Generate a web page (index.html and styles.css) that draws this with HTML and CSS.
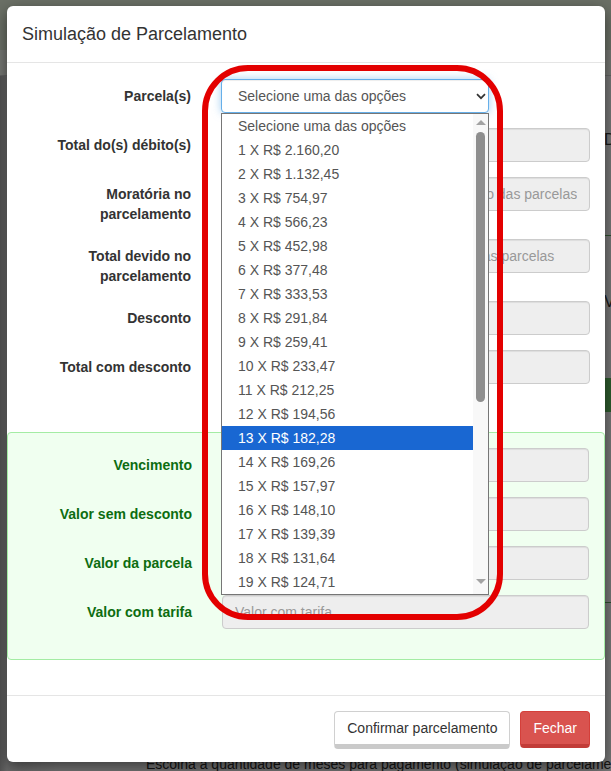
FILE: index.html
```html
<!DOCTYPE html>
<html lang="pt-BR">
<head>
<meta charset="utf-8">
<title>Simulação de Parcelamento</title>
<link rel="stylesheet" href="styles.css">
</head>
<body>
  <div class="page">
    <header class="page-nav"></header>
    <div class="page-sub"></div>
    <main class="page-main">
      <div class="page-left"></div>
      <aside class="page-right">
        <p class="side-title">Dados do débito</p>
        <div class="side-box">
          <p class="side-text">Valores</p>
          <div class="side-btn"></div>
        </div>
      </aside>
    </main>
    <p class="page-hint">Escolha a quantidade de meses para pagamento (simulação de parcelamento)</p>
  </div>

  <div class="backdrop"></div>

  <div class="modal" role="dialog" aria-labelledby="modal-title">
    <div class="modal-header">
      <h4 class="modal-title" id="modal-title">Simulação de Parcelamento</h4>
    </div>

    <div class="modal-body">
      <div class="form-row">
        <label class="form-label">Parcela(s)</label>
        <div class="field">
          <div class="select-box">
            <span>Selecione uma das opções</span>
            <svg class="chevron" width="10" height="7" viewBox="0 0 10 7"><path d="M1 1.2 L5 5.2 L9 1.2" fill="none" stroke="#333" stroke-width="1.7"/></svg>
          </div>
        </div>
      </div>
      <div class="form-row">
        <label class="form-label">Total do(s) débito(s)</label>
        <div class="field"><input class="form-control" readonly placeholder="Total do(s) débito(s)"></div>
      </div>
      <div class="form-row">
        <label class="form-label">Moratória no parcelamento</label>
        <div class="field"><input class="form-control" readonly placeholder="Moratória aplicada segundo o vencimento das parcelas"></div>
      </div>
      <div class="form-row">
        <label class="form-label">Total devido no parcelamento</label>
        <div class="field"><input class="form-control" readonly placeholder="Valor total devido com a soma de todas as parcelas"></div>
      </div>
      <div class="form-row">
        <label class="form-label">Desconto</label>
        <div class="field"><input class="form-control" readonly placeholder="Desconto"></div>
      </div>
      <div class="form-row">
        <label class="form-label">Total com desconto</label>
        <div class="field"><input class="form-control" readonly placeholder="Total com desconto"></div>
      </div>

      <div class="panel-success">
        <div class="form-row">
          <label class="form-label">Vencimento</label>
          <div class="field"><input class="form-control" readonly placeholder="Vencimento"></div>
        </div>
        <div class="form-row">
          <label class="form-label">Valor sem desconto</label>
          <div class="field"><input class="form-control" readonly placeholder="Valor sem desconto"></div>
        </div>
        <div class="form-row">
          <label class="form-label">Valor da parcela</label>
          <div class="field"><input class="form-control" readonly placeholder="Valor da parcela"></div>
        </div>
        <div class="form-row">
          <label class="form-label">Valor com tarifa</label>
          <div class="field"><input class="form-control" readonly placeholder="Valor com tarifa"></div>
        </div>
      </div>
    </div>

    <div class="modal-footer">
      <button class="btn btn-default" type="button">Confirmar parcelamento</button>
      <button class="btn btn-danger" type="button">Fechar</button>
    </div>

    <!-- open option list of the "Parcela(s)" select -->
    <div class="listbox" role="listbox">
      <ul class="options">
        <li>Selecione uma das opções</li>
        <li>1 X R$ 2.160,20</li>
        <li>2 X R$ 1.132,45</li>
        <li>3 X R$ 754,97</li>
        <li>4 X R$ 566,23</li>
        <li>5 X R$ 452,98</li>
        <li>6 X R$ 377,48</li>
        <li>7 X R$ 333,53</li>
        <li>8 X R$ 291,84</li>
        <li>9 X R$ 259,41</li>
        <li>10 X R$ 233,47</li>
        <li>11 X R$ 212,25</li>
        <li>12 X R$ 194,56</li>
        <li class="selected">13 X R$ 182,28</li>
        <li>14 X R$ 169,26</li>
        <li>15 X R$ 157,97</li>
        <li>16 X R$ 148,10</li>
        <li>17 X R$ 139,39</li>
        <li>18 X R$ 131,64</li>
        <li>19 X R$ 124,71</li>
      </ul>
      <div class="scrollbar">
        <div class="scroll-btn"><span class="arrow-up"></span></div>
        <div class="scroll-thumb"></div>
        <div class="scroll-space"></div>
        <div class="scroll-btn scroll-btn-down"><span class="arrow-down"></span></div>
      </div>
    </div>

    <!-- red marker drawn around the select -->
    <div class="marker"></div>
  </div>
</body>
</html>
```

FILE: styles.css
```css
* {
  box-sizing: border-box;
}

html,
body {
  margin: 0;
  padding: 0;
}

body {
  position: relative;
  width: 611px;
  height: 771px;
  overflow: hidden;
  font-family: "Liberation Sans", Arial, Helvetica, sans-serif;
  font-size: 14px;
  line-height: 20px;
  color: #333;
}

/* ---------- page underneath the dialog ---------- */
.page {
  height: 771px;
  background: linear-gradient(to right, #a6a6a6 0, #d4d4d4 7px, #ececec 60px, #eeeeee 100%);
}

.page-nav {
  height: 50px;
  background: #d6e0cd;
}

.page-sub {
  height: 26px;
  background: #eaeee6;
  border-bottom: 1px solid #c6c6c6;
}

.page-main {
  display: flex;
  height: 678px;
}

.page-left {
  width: 604px;
  flex: none;
}

.page-right {
  flex: 1;
  overflow: hidden;
}

.side-title {
  margin: 53px 0 0;
  font-size: 16px;
  line-height: 22px;
  white-space: nowrap;
  color: #333;
}

.side-box {
  margin-top: 84px;
  height: 368px;
  border-top: 1px solid #5f9f5f;
  border-bottom: 1px solid #5f9f5f;
}

.side-text {
  margin: 56px 0 0;
  font-size: 16px;
  line-height: 20px;
  white-space: nowrap;
}

.side-btn {
  margin-top: 66px;
  height: 34px;
  background: #5cb85c;
}

.page-hint {
  margin: 0;
  padding-left: 146px;
  font-size: 14px;
  line-height: 20px;
  white-space: nowrap;
  color: #2a2a2a;
}

.backdrop {
  position: absolute;
  inset: 0;
  background: rgba(0, 0, 0, 0.5);
}

/* ---------- dialog ---------- */
.modal {
  position: absolute;
  left: 7px;
  top: 6px;
  width: 598px;
  background: #fff;
  border-radius: 6px;
  box-shadow: 0 5px 15px rgba(0, 0, 0, 0.5);
}

.modal-header {
  padding: 15px;
  border-bottom: 1px solid #e5e5e5;
}

.modal-title {
  margin: 0;
  font-size: 18px;
  font-weight: 400;
  line-height: 26px;
  color: #333;
}

.modal-body {
  padding: 16px 15px 15px;
}

.form-row {
  display: grid;
  grid-template-columns: 169px 1fr;
  column-gap: 30px;
  margin-bottom: 15px;
}

.form-label {
  padding-top: 7px;
  text-align: right;
  font-weight: 700;
}

.form-control {
  display: block;
  width: 100%;
  height: 34px;
  margin: 0;
  padding: 6px 12px;
  font-family: inherit;
  font-size: 14px;
  line-height: 20px;
  color: #555;
  background: #eeeeee;
  border: 1px solid #ccc;
  border-radius: 4px;
  box-shadow: inset 0 1px 1px rgba(0, 0, 0, 0.075);
  outline: none;
}

.form-control::placeholder {
  color: #999;
  opacity: 1;
}

.select-box {
  display: flex;
  align-items: center;
  justify-content: space-between;
  width: 268px;
  height: 34px;
  padding: 0 2px 0 16px;
  color: #555;
  background: #fff;
  border: 1px solid #66afe9;
  border-radius: 4px;
  box-shadow: inset 0 1px 1px rgba(0, 0, 0, 0.075), 0 0 8px rgba(102, 175, 233, 0.6);
  white-space: nowrap;
}

.chevron {
  display: block;
  margin-top: 1px;
}

/* the row margin above collapses into this one: 48px leaves 33px of extra space */
.panel-success {
  margin: 48px -15px 20px;
  padding: 15px 15px 15px;
  background: #f0fff0;
  border: 1px solid #a4eca4;
  border-radius: 4px;
}

.panel-success .form-label {
  color: #0d6d10;
}

.modal-footer {
  display: flex;
  justify-content: flex-end;
  gap: 10px;
  padding: 15px 15px 13px;
  border-top: 1px solid #e5e5e5;
}

.btn {
  height: 38px;
  padding: 0 12px;
  font-family: inherit;
  font-size: 14px;
  line-height: 20px;
  border: 1px solid;
  border-bottom-width: 5px;
  border-radius: 4px;
  cursor: pointer;
}

.btn-default {
  color: #333;
  background: #fff;
  border-color: #d0d0d0 #d0d0d0 #cacaca;
}

.btn-danger {
  height: 37px;
  border-bottom-width: 4px;
  color: #fff;
  background: #d9534f;
  border-color: #d43f3a #d43f3a #c23c38;
}

/* ---------- open option list ---------- */
.listbox {
  position: absolute;
  left: 214px;
  top: 107px;
  width: 268px;
  height: 482px;
  display: flex;
  background: #fff;
  border: 1px solid #767676;
}

.options {
  flex: 1;
  margin: 0;
  padding: 0;
  list-style: none;
}

.options li {
  height: 24px;
  padding-left: 16px;
  line-height: 24px;
  color: #555;
  white-space: nowrap;
}

.options li.selected {
  color: #fff;
  background: #1967d2;
}

.scrollbar {
  display: flex;
  flex-direction: column;
  width: 15px;
  background: #f8f8f8;
}

.scroll-btn {
  display: flex;
  align-items: center;
  justify-content: center;
  height: 17px;
  margin-bottom: 1px;
}

.scroll-btn-down {
  height: 20px;
  margin-bottom: 0;
  align-items: flex-start;
  padding-top: 5px;
}

.arrow-up,
.arrow-down {
  width: 0;
  height: 0;
  border-left: 5px solid transparent;
  border-right: 5px solid transparent;
}

.arrow-up {
  border-bottom: 5px solid #a3a3a3;
}

.arrow-down {
  border-top: 5px solid #a3a3a3;
}

.scroll-thumb {
  height: 270px;
  margin: 0 3px;
  background: #8e8e8e;
  border-radius: 5px;
}

.scroll-space {
  flex: 1;
}

/* ---------- red marker ---------- */
.marker {
  position: absolute;
  left: 195px;
  top: 59px;
  width: 301px;
  height: 555px;
  border: 6px solid #e30000;
  border-radius: 46px;
  pointer-events: none;
}
```
